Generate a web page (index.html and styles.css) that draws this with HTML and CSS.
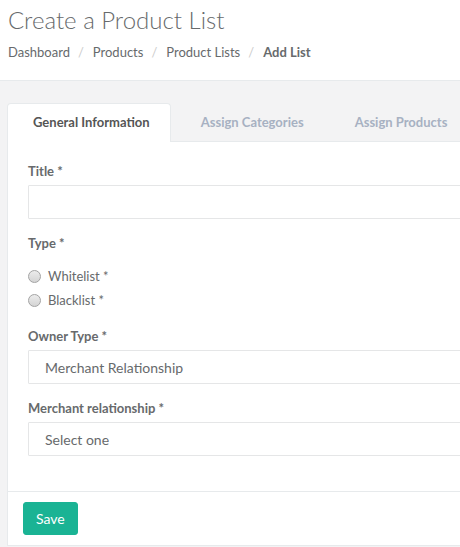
FILE: index.html
```html
<!DOCTYPE html>
<html lang="en">
<head>
<meta charset="utf-8">
<title>Create a Product List</title>
<link rel="stylesheet" href="styles.css">
</head>
<body>
<header class="page-heading">
  <h1 class="page-title">Create a Product List</h1>
  <ol class="breadcrumb">
    <li class="crumb">Dashboard</li>
    <li class="sep">/</li>
    <li class="crumb">Products</li>
    <li class="sep">/</li>
    <li class="crumb">Product Lists</li>
    <li class="sep">/</li>
    <li class="crumb active">Add List</li>
  </ol>
</header>
<main class="wrapper">
  <div class="tabs-container">
    <ul class="nav-tabs">
      <li class="tab active">General Information</li>
      <li class="tab">Assign Categories</li>
      <li class="tab">Assign Products</li>
    </ul>
    <form class="panel">
      <div class="panel-body">
        <div class="form-group">
          <label class="control-label" for="title">Title *</label>
          <input class="form-control" id="title" type="text">
        </div>
        <div class="form-group">
          <label class="control-label">Type *</label>
          <div class="radios">
            <label class="radio"><input type="radio" name="type" class="radio-input"><span class="radio-text">Whitelist *</span></label>
            <label class="radio"><input type="radio" name="type" class="radio-input"><span class="radio-text">Blacklist *</span></label>
          </div>
        </div>
        <div class="form-group">
          <label class="control-label" for="owner">Owner Type *</label>
          <select class="form-control select" id="owner">
            <option>Merchant Relationship</option>
          </select>
        </div>
        <div class="form-group">
          <label class="control-label" for="merchant">Merchant relationship *</label>
          <select class="form-control select" id="merchant">
            <option>Select one</option>
          </select>
        </div>
      </div>
      <div class="panel-footer">
        <button type="button" class="btn-primary">Save</button>
      </div>
    </form>
  </div>
</main>
</body>
</html>
```
FILE: styles.css
```css
* { box-sizing: border-box; }

html, body {
  margin: 0;
  padding: 0;
  background: #f3f3f4;
  overflow: hidden;
}

body {
  font-family: Lato, "Open Sans", "Liberation Sans", sans-serif;
  font-size: 13px;
  color: #676a6c;
  width: 460px;
  height: 547px;
}

.page-heading {
  background: #fff;
  border-bottom: 1px solid #e7eaec;
  padding: 6px 8px 18px;
}

.page-title {
  margin: 0 0 9px;
  font-size: 24px;
  line-height: 28px;
  font-weight: 300;
  color: #676a6c;
}

.breadcrumb {
  display: flex;
  list-style: none;
  margin: 0;
  padding: 0;
  font-size: 13px;
  line-height: 19px;
  white-space: nowrap;
}

.sep {
  color: #cccccc;
  padding: 0 9px 0 8px;
}

.crumb.active {
  font-weight: 700;
}

.wrapper {
  padding: 22px 0 0 7px;
}

.tabs-container {
  width: 760px;
}

.nav-tabs {
  display: flex;
  list-style: none;
  margin: 0;
  padding: 0;
  border-bottom: 1px solid #e7eaec;
}

.tab {
  padding: 9px 20px 10px 25px;
  line-height: 19px;
  font-size: 13px;
  font-weight: 700;
  color: #a7b1c2;
  border: 1px solid transparent;
  border-bottom: 0;
  border-radius: 4px 4px 0 0;
  margin-right: 4px;
  margin-bottom: -1px;
  white-space: nowrap;
}

.tab.active {
  background: #fff;
  color: #555555;
  border-color: #e7eaec;
}

.panel {
  margin: 0;
  background: #fff;
  border: 1px solid #e7eaec;
  border-top: 0;
}

.panel-body {
  padding: 20px 20px 5px;
}

.panel-body .form-group:last-child {
  margin-bottom: 30px;
}

.form-group {
  margin-bottom: 15px;
}

.control-label {
  display: block;
  height: 18px;
  font-weight: 700;
  line-height: 18px;
  margin-bottom: 5px;
}

.form-control {
  display: block;
  width: 100%;
  height: 34px;
  border: 1px solid #e5e6e7;
  border-radius: 1px;
  background: #fff;
  padding: 6px 16px;
  font-family: inherit;
  font-size: 14px;
  color: #676a6c;
  outline: none;
}

.select {
  -webkit-appearance: none;
  appearance: none;
}

.radios {
  display: flex;
  flex-direction: column;
  gap: 5px;
  padding-top: 10px;
  padding-bottom: 2px;
}

.radio {
  display: flex;
  align-items: center;
  height: 19px;
  line-height: 19px;
}

.radio-input {
  -webkit-appearance: none;
  appearance: none;
  width: 13px;
  height: 13px;
  margin: 0 7px 0 0;
  border: 1px solid #a3a3a3;
  border-radius: 50%;
  background: linear-gradient(#ececec, #d4d4d4);
  flex: none;
}

.radio-text {
  white-space: pre;
}

.panel-footer {
  border-top: 1px solid #e7eaec;
  padding: 10px 15px;
}

.btn-primary {
  display: block;
  height: 33px;
  padding: 0 12px;
  background: #1ab394;
  border: 1px solid #1ab394;
  border-radius: 3px;
  color: #fff;
  font-family: inherit;
  font-size: 14px;
  line-height: 31px;
}
```
